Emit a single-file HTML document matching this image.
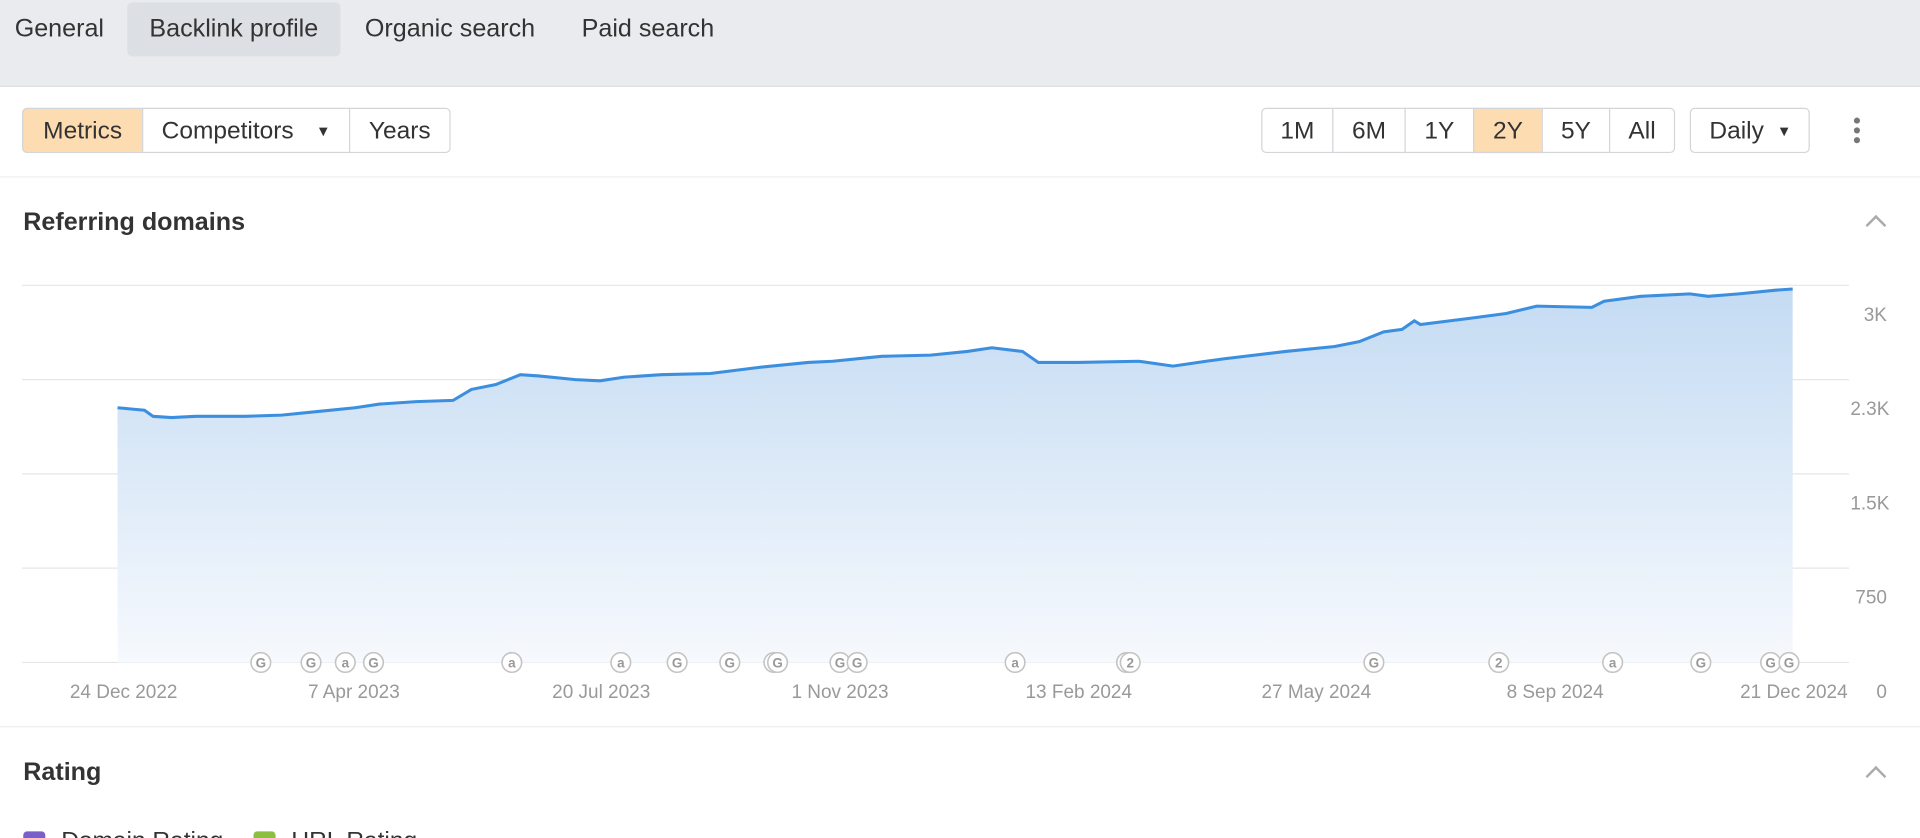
<!DOCTYPE html>
<html><head><meta charset="utf-8"><style>
html,body{margin:0;padding:0;width:1920px;height:838px;overflow:hidden;background:#fff;font-family:"Liberation Sans",sans-serif;}
#w{width:1568px;height:684px;transform:scale(1.22449);transform-origin:0 0;position:relative;}
.top{position:absolute;left:0;top:0;width:1568px;height:70px;background:#e9ebee;border-bottom:1px solid #dfe1e4;}
.tab{position:absolute;top:2px;height:44px;line-height:44px;font-size:20.5px;color:#333;padding:0 18px;border-radius:4px;}
.btn{position:absolute;top:88px;height:37px;line-height:37px;font-size:20px;color:#333;border:1px solid #d3d5d8;text-align:center;background:#fff;box-sizing:border-box;}
.on{background:#fddcb1;}
.h{position:absolute;left:19px;font-size:20.5px;font-weight:bold;color:#333;}
.car{position:absolute;right:30px;width:10px;height:10px;border-left:2px solid #aaa;border-top:2px solid #aaa;transform:rotate(45deg);}
</style></head><body><div id="w">
<div class="top">
<div class="tab" style="left:-6px">General</div>
<div class="tab" style="left:104px;background:#dcdfe3">Backlink profile</div>
<div class="tab" style="left:280px">Organic search</div>
<div class="tab" style="left:457px">Paid search</div>
</div>
<div class="btn on" style="left:18px;width:99px;border-radius:4px 0 0 4px">Metrics</div>
<div class="btn" style="left:116px;width:170px;text-align:left;padding-left:15px">Competitors <span style="font-size:12px;position:absolute;right:15px">▼</span></div>
<div class="btn" style="left:285px;width:83px;border-radius:0 4px 4px 0">Years</div>
<div class="btn" style="left:1030px;width:59px;border-radius:4px 0 0 4px">1M</div>
<div class="btn" style="left:1088px;width:60px">6M</div>
<div class="btn" style="left:1147px;width:57px">1Y</div>
<div class="btn on" style="left:1203px;width:57px">2Y</div>
<div class="btn" style="left:1259px;width:56px">5Y</div>
<div class="btn" style="left:1314px;width:54px;border-radius:0 4px 4px 0">All</div>
<div class="btn" style="left:1380px;width:98px;border-radius:4px;text-align:left;padding-left:15px">Daily <span style="font-size:12px;position:absolute;right:14px">▼</span></div>
<div style="position:absolute;left:1514px;top:96px;width:5px">
<div style="width:5px;height:5px;border-radius:50%;background:#777;margin-bottom:3px"></div><div style="width:5px;height:5px;border-radius:50%;background:#777;margin-bottom:3px"></div><div style="width:5px;height:5px;border-radius:50%;background:#777"></div></div>
<div style="position:absolute;left:0;top:144px;width:1568px;height:1px;background:#eceef0"></div>
<div class="h" style="top:170px">Referring domains</div>
<div class="car" style="top:178px"></div>
<svg style="position:absolute;left:0;top:0" width="1568" height="684">
<defs><linearGradient id="g" x1="0" y1="0" x2="0" y2="1"><stop offset="0" stop-color="#c4dbf3"/><stop offset="1" stop-color="#f6f9fd"/></linearGradient></defs>
<g stroke="#e6e6e6" stroke-width="1"><line x1="18" y1="233" x2="1510" y2="233"/><line x1="18" y1="310" x2="1510" y2="310"/><line x1="18" y1="387" x2="1510" y2="387"/><line x1="18" y1="464" x2="1510" y2="464"/><line x1="18" y1="541" x2="1510" y2="541"/></g>
<path d="M96 333 L118 335 L125 340 L140 341 L160 340 L200 340 L230 339 L260 336 L290 333 L310 330 L340 328 L370 327 L385 318 L405 314 L425 306 L440 307 L470 310 L490 311 L510 308 L540 306 L580 305 L620 300 L660 296 L680 295 L720 291 L760 290 L790 287 L810 284 L835 287 L848 296 L880 296 L930 295 L958 299 L985 295 L1000 293 L1050 287 L1090 283 L1110 279 L1130 271 L1145 269 L1155 262 L1160 265 L1200 260 L1230 256 L1255 250 L1300 251 L1310 246 L1340 242 L1380 240 L1395 242 L1420 240 L1450 237 L1464 236 L1464 541 L96 541 Z" fill="url(#g)"/>
<path d="M96 333 L118 335 L125 340 L140 341 L160 340 L200 340 L230 339 L260 336 L290 333 L310 330 L340 328 L370 327 L385 318 L405 314 L425 306 L440 307 L470 310 L490 311 L510 308 L540 306 L580 305 L620 300 L660 296 L680 295 L720 291 L760 290 L790 287 L810 284 L835 287 L848 296 L880 296 L930 295 L958 299 L985 295 L1000 293 L1050 287 L1090 283 L1110 279 L1130 271 L1145 269 L1155 262 L1160 265 L1200 260 L1230 256 L1255 250 L1300 251 L1310 246 L1340 242 L1380 240 L1395 242 L1420 240 L1450 237 L1464 236" fill="none" stroke="#3c8fdf" stroke-width="2.5"/>
<g fill="#fff" stroke="#c4c4c4" stroke-width="1.3" font-family="Liberation Sans" font-size="11" font-weight="bold" text-anchor="middle">
<g><circle cx="213" cy="541" r="8"/><circle cx="254" cy="541" r="8"/><circle cx="282" cy="541" r="8"/><circle cx="305" cy="541" r="8"/><circle cx="418" cy="541" r="8"/><circle cx="507" cy="541" r="8"/><circle cx="553" cy="541" r="8"/><circle cx="596" cy="541" r="8"/><circle cx="632" cy="541" r="8"/><circle cx="635" cy="541" r="8"/><circle cx="686" cy="541" r="8"/><circle cx="700" cy="541" r="8"/><circle cx="829" cy="541" r="8"/><circle cx="920" cy="541" r="8"/><circle cx="923" cy="541" r="8"/><circle cx="1122" cy="541" r="8"/><circle cx="1224" cy="541" r="8"/><circle cx="1317" cy="541" r="8"/><circle cx="1389" cy="541" r="8"/><circle cx="1446" cy="541" r="8"/><circle cx="1461" cy="541" r="8"/></g>
<g fill="#999" stroke="none"><text x="213" y="545">G</text><text x="254" y="545">G</text><text x="282" y="545">a</text><text x="305" y="545">G</text><text x="418" y="545">a</text><text x="507" y="545">a</text><text x="553" y="545">G</text><text x="596" y="545">G</text><text x="635" y="545">G</text><text x="686" y="545">G</text><text x="700" y="545">G</text><text x="829" y="545">a</text><text x="923" y="545">2</text><text x="1122" y="545">G</text><text x="1224" y="545">2</text><text x="1317" y="545">a</text><text x="1389" y="545">G</text><text x="1446" y="545">G</text><text x="1461" y="545">G</text></g>
</g>
<g fill="#999" font-family="Liberation Sans" font-size="15.5">
<text x="1541" y="262" text-anchor="end">3K</text><text x="1543" y="339" text-anchor="end">2.3K</text><text x="1543" y="416" text-anchor="end">1.5K</text><text x="1541" y="493" text-anchor="end">750</text><text x="1541" y="570" text-anchor="end">0</text>
<g text-anchor="middle"><text x="101" y="570">24 Dec 2022</text><text x="289" y="570">7 Apr 2023</text><text x="491" y="570">20 Jul 2023</text><text x="686" y="570">1 Nov 2023</text><text x="881" y="570">13 Feb 2024</text><text x="1075" y="570">27 May 2024</text><text x="1270" y="570">8 Sep 2024</text><text x="1465" y="570">21 Dec 2024</text></g>
</g>
</svg>
<div style="position:absolute;left:0;top:593px;width:1568px;height:1px;background:#eceef0"></div>
<div class="h" style="top:619px">Rating</div>
<div class="car" style="top:628px"></div>
<div style="position:absolute;left:19px;top:679px;width:18px;height:18px;border-radius:3px;background:#7b5fc9"></div>
<div style="position:absolute;left:50px;top:676px;font-size:20px;color:#333">Domain Rating</div>
<div style="position:absolute;left:207px;top:679px;width:18px;height:18px;border-radius:3px;background:#8cbf3f"></div>
<div style="position:absolute;left:238px;top:676px;font-size:20px;color:#333">URL Rating</div>
</div></body></html>
